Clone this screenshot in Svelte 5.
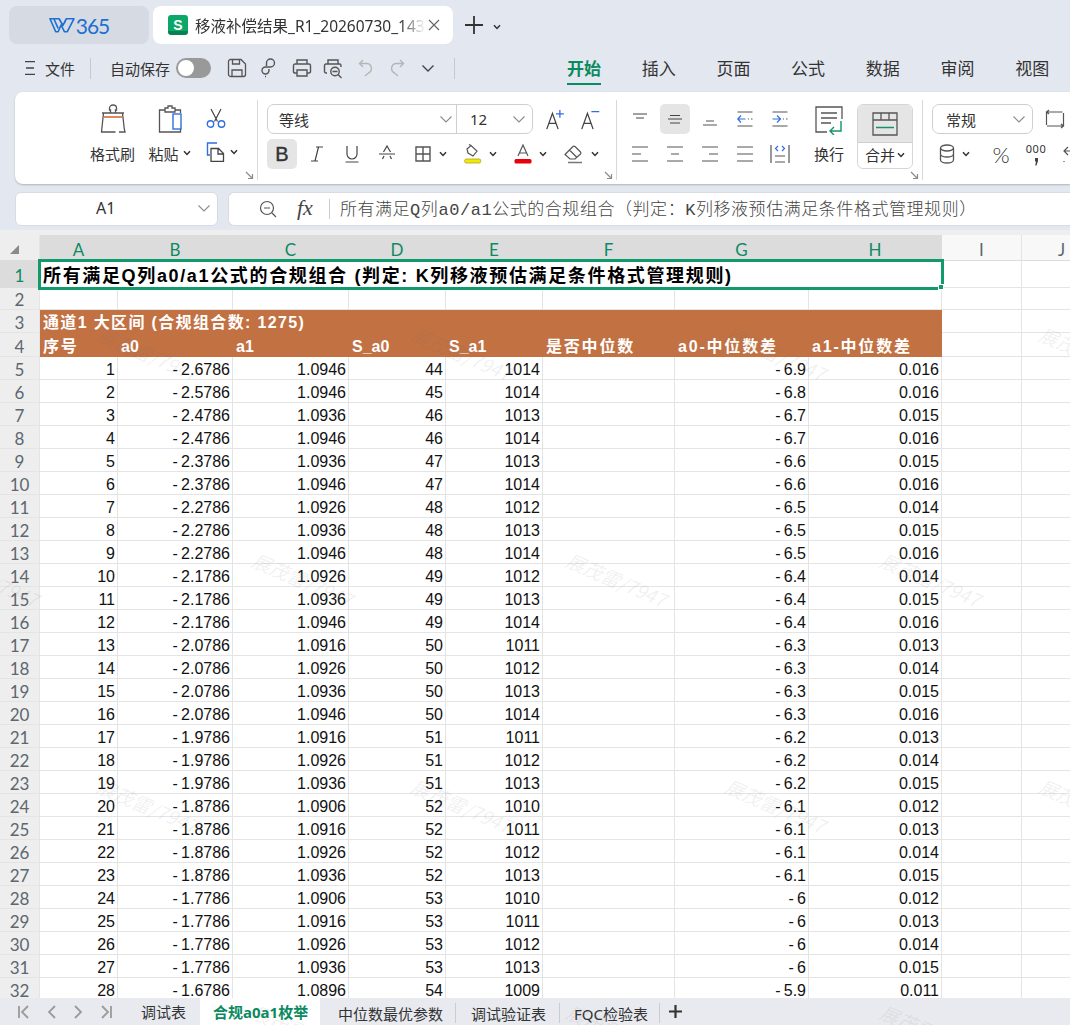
<script>
	const cols = ['A', 'B', 'C', 'D', 'E', 'F', 'G', 'H'];
	const widths = [40, 78, 115, 116, 97, 97, 132, 134, 133, 80, 80];
	const heads = ['序号', 'a0', 'a1', 'S_a0', 'S_a1', '是否中位数', 'a0-中位数差', 'a1-中位数差'];
	// a0, a1, S_a0, S_a1, a0 diff, a1 diff
	const rows = [
		['-2.6786', '1.0946', 44, 1014, '-6.9', '0.016'],
		['-2.5786', '1.0946', 45, 1014, '-6.8', '0.016'],
		['-2.4786', '1.0936', 46, 1013, '-6.7', '0.015'],
		['-2.4786', '1.0946', 46, 1014, '-6.7', '0.016'],
		['-2.3786', '1.0936', 47, 1013, '-6.6', '0.015'],
		['-2.3786', '1.0946', 47, 1014, '-6.6', '0.016'],
		['-2.2786', '1.0926', 48, 1012, '-6.5', '0.014'],
		['-2.2786', '1.0936', 48, 1013, '-6.5', '0.015'],
		['-2.2786', '1.0946', 48, 1014, '-6.5', '0.016'],
		['-2.1786', '1.0926', 49, 1012, '-6.4', '0.014'],
		['-2.1786', '1.0936', 49, 1013, '-6.4', '0.015'],
		['-2.1786', '1.0946', 49, 1014, '-6.4', '0.016'],
		['-2.0786', '1.0916', 50, 1011, '-6.3', '0.013'],
		['-2.0786', '1.0926', 50, 1012, '-6.3', '0.014'],
		['-2.0786', '1.0936', 50, 1013, '-6.3', '0.015'],
		['-2.0786', '1.0946', 50, 1014, '-6.3', '0.016'],
		['-1.9786', '1.0916', 51, 1011, '-6.2', '0.013'],
		['-1.9786', '1.0926', 51, 1012, '-6.2', '0.014'],
		['-1.9786', '1.0936', 51, 1013, '-6.2', '0.015'],
		['-1.8786', '1.0906', 52, 1010, '-6.1', '0.012'],
		['-1.8786', '1.0916', 52, 1011, '-6.1', '0.013'],
		['-1.8786', '1.0926', 52, 1012, '-6.1', '0.014'],
		['-1.8786', '1.0936', 52, 1013, '-6.1', '0.015'],
		['-1.7786', '1.0906', 53, 1010, '-6', '0.012'],
		['-1.7786', '1.0916', 53, 1011, '-6', '0.013'],
		['-1.7786', '1.0926', 53, 1012, '-6', '0.014'],
		['-1.7786', '1.0936', 53, 1013, '-6', '0.015'],
		['-1.6786', '1.0896', 54, 1009, '-5.9', '0.011']
	];
	const neg = (v) => String(v).replace('-', '-\u2009');
	const ascii = (s) => /^[\x00-\x7f]+$/.test(s);

	const marks = [];
	[[322, 109], [548, -50], [774, 109], [1000, -50]].forEach(([y, x0]) => {
		for (let i = 0; i < 4; i++) marks.push({ x: x0 + i * 314, y });
	});
</script>

{#snippet chev()}
	<svg class="chev" width="8" height="6" viewBox="0 0 8 6"><path d="M1 1.200 4 4.400 7 1.200" fill="none" stroke="#333" stroke-width="1.500" /></svg>
{/snippet}
{#snippet dd()}
	<svg width="14" height="9" viewBox="0 0 14 9"><path d="M1.500 1.500 7 7l5.500-5.500" fill="none" stroke="#8c8c8c" stroke-width="1.100" /></svg>
{/snippet}
{#snippet launcher()}
	<svg class="launch" width="9" height="9" viewBox="0 0 9 9"><path d="M1 1 7 7M3 7.500h4.500V3" fill="none" stroke="#8a8a8a" stroke-width="1.200" /></svg>
{/snippet}

<div class="app">
	<header class="tabbar">
		<div class="home">
			<svg width="26" height="16" viewBox="0 0 27 16"><path d="M1 1.500h9.500l4 7 3.500-7h8L19 15h-3l-3.500-7-3 7h-2.500zM5 1.500l4.500 10M18 1.500l-2 4.500" fill="none" stroke="#1c70d2" stroke-width="1.700" stroke-linejoin="round" /></svg>
			<span>365</span>
		</div>
		<div class="doc">
			<span class="s-tile">S</span>
			<span class="doc-name">移液补偿结果_R1_20260730_143</span>
			<svg width="12" height="12" viewBox="0 0 12 12"><path d="M1 1l10 10M11 1 1 11" stroke="#666" stroke-width="1.200" /></svg>
		</div>
		<svg class="plus" width="18" height="18" viewBox="0 0 18 18"><path d="M9 0v18M0 9h18" stroke="#333" stroke-width="1.800" /></svg>
		<span class="plus-chev">{@render chev()}</span>
	</header>

	<div class="quick">
		<svg class="menu" width="10" height="14" viewBox="0 0 10 14"><path d="M0 .7h10M1 7h8M0 13.300h10" stroke="#444" stroke-width="1.300" /></svg>
		<span class="q-file">文件</span>
		<i class="q-sep"></i>
		<span class="q-auto">自动保存</span>
		<span class="toggle"><b></b></span>
		<svg class="q-ic first" width="20" height="20" viewBox="0 0 20 20"><path d="M1.500 3.500a2 2 0 0 1 2-2H14l4.500 4.500v10.500a2 2 0 0 1-2 2h-13a2 2 0 0 1-2-2zM5 18.500V12h10v6.500M5.500 2v4h7V2" fill="none" stroke="#555" stroke-width="1.300" /></svg>
		<svg class="q-ic" style="margin-left:13px" width="18" height="20" viewBox="0 0 18 20"><path d="M6.500 8V5a4 4 0 1 1 4 4H5.500a3.500 3.500 0 1 0 3.500 3.500V11M5 18.500h1" fill="none" stroke="#555" stroke-width="1.400" /></svg>
		<svg class="q-ic" style="margin-left:14px" width="20" height="20" viewBox="0 0 20 20"><path d="M5 6V2h10v4M5 15H2.500a1.500 1.500 0 0 1-1-1V7.500A1.500 1.500 0 0 1 3 6h14a1.500 1.500 0 0 1 1.500 1.500V14a1.500 1.500 0 0 1-1.500 1h-2M5 12h10v6H5z" fill="none" stroke="#555" stroke-width="1.400" /></svg>
		<svg class="q-ic" style="margin-left:11px" width="21" height="21" viewBox="0 0 21 21"><path d="M5 6V2h10v4M4 15H3a1.500 1.500 0 0 1-1.500-1.500v-6A1.500 1.500 0 0 1 3 6h13.500A1.500 1.500 0 0 1 18 7.500V9" fill="none" stroke="#555" stroke-width="1.400" /><circle cx="12" cy="13.500" r="4.200" fill="none" stroke="#555" stroke-width="1.400" /><path d="m15 16.500 3.500 3.500M9.500 13.500h5" stroke="#555" stroke-width="1.400" /></svg>
		<svg class="q-ic" style="margin-left:14px" width="16" height="18" viewBox="0 0 16 18"><path d="M5 1 1.500 4.500 5 8M2 4.500h7a5 5 0 0 1 1.500 9.500L7 17" fill="none" stroke="#b5b5b5" stroke-width="1.400" /></svg>
		<svg class="q-ic" style="margin-left:15px" width="16" height="18" viewBox="0 0 16 18"><path d="M11 1l3.500 3.500L11 8M14 4.500H7A5 5 0 0 0 5.500 14L9 17" fill="none" stroke="#b5b5b5" stroke-width="1.400" /></svg>
		<svg class="q-ic" style="margin-left:16px" width="14" height="9" viewBox="0 0 14 9"><path d="M1.500 1.500 7 7l5.500-5.500" fill="none" stroke="#444" stroke-width="1.400" /></svg>
		<i class="q-sep last"></i>
		<nav class="ribbon-tabs">
			<span class="on">开始</span><span>插入</span><span>页面</span><span>公式</span><span>数据</span><span>审阅</span><span>视图</span>
		</nav>
	</div>

	<section class="ribbon">
		<div class="group clip">
			<div class="big">
				<svg width="26" height="30" viewBox="0 0 26 30"><path d="M10.500 9V6H9.500V4a3.500 3 0 0 1 7 0v2h-1v3M2 9h22M3.500 9 1.500 28h14M22.500 9l1 9c.3 4 .6 7 1.500 10h-6" fill="none" stroke="#555" stroke-width="1.300" /><path d="M4 13h18" stroke="#d4622a" stroke-width="1.400" /></svg>
				<span>格式刷</span>
			</div>
			<div class="big paste">
				<svg width="26" height="28" viewBox="0 0 26 28"><path d="M8 5H2.500v22h21v-7M18 5h5.500v3M8 5V3h3V1h4v2h3v4H8z" fill="none" stroke="#555" stroke-width="1.300" /><rect x="16" y="9" width="8" height="15" fill="#fff" stroke="#2f6fe0" stroke-width="1.400" /></svg>
				<span>粘贴{@render chev()}</span>
			</div>
			<div class="small-col">
				<svg width="20" height="20" viewBox="0 0 20 20"><path d="m5 1 6.500 12.500M15 1 8.500 13.500" stroke="#444" stroke-width="1.200" /><circle cx="4.500" cy="16" r="3.200" fill="none" stroke="#2f6fe0" stroke-width="1.400" /><circle cx="15.500" cy="16" r="3.200" fill="none" stroke="#2f6fe0" stroke-width="1.400" /></svg>
				<span class="copy">
					<svg width="20" height="20" viewBox="0 0 20 20"><path d="M11 1H1.500v12H4" fill="none" stroke="#2f6fe0" stroke-width="1.400" /><path d="M5 6.500h7.500l5 5v8H5zM12 7v5h5.500" fill="#fff" stroke="#444" stroke-width="1.300" /></svg>
					{@render chev()}
				</span>
			</div>
			{@render launcher()}
		</div>

		<div class="group font">
			<div class="line">
				<div class="combo font-box">
					<span class="cell name">等线{@render dd()}</span>
					<span class="cell size">12{@render dd()}</span>
				</div>
				<span class="tb" style="margin-left:2px">
					<svg width="21" height="21" viewBox="0 0 24 24"><path d="M2 23 8.500 5 15 23M4.500 16.500h8" fill="none" stroke="#444" stroke-width="1.500" /><path d="M17 1v9M12.500 5.500h9" stroke="#2f6fe0" stroke-width="1.500" /></svg>
				</span>
				<span class="tb">
					<svg width="21" height="21" viewBox="0 0 24 24"><path d="M2 23 8.500 5 15 23M4.500 16.500h8" fill="none" stroke="#444" stroke-width="1.500" /><path d="M13 3h9" stroke="#2f6fe0" stroke-width="1.500" /></svg>
				</span>
			</div>
			<div class="line">
				<span class="tb sel bold">B</span>
				<span class="tb"><svg width="16" height="16" viewBox="0 0 16 16"><path d="M7 1h7M9.500 1 6 15M2 15h7" fill="none" stroke="#444" stroke-width="1.200" /></svg></span>
				<span class="tb"><svg width="16" height="18" viewBox="0 0 16 18"><path d="M3 1v8a5 5 0 0 0 10 0V1M1.500 17h13" fill="none" stroke="#444" stroke-width="1.200" /></svg></span>
				<span class="tb"><svg width="18" height="18" viewBox="0 0 18 18"><path d="M5.500 7 9 1l3.500 6M4.500 14l1.500-3M13.500 14 12 11M1 9h16" fill="none" stroke="#444" stroke-width="1.200" /></svg></span>
				<span class="tb drop"><svg width="18" height="18" viewBox="0 0 18 18"><path d="M2 2h14v14H2zM9 2v14M2 9h14" fill="none" stroke="#555" stroke-width="1.400" /></svg>{@render chev()}</span>
				<span class="tb drop"><svg width="18" height="20" viewBox="0 0 18 20"><path d="M3 5l4-3.500L13 7l-4 5-5-3zM7 1.500 5 .5" fill="none" stroke="#555" stroke-width="1.200" /><rect x=".7" y="15" width="16" height="4" rx="1.500" fill="#f5e900" stroke="#a9a32a" stroke-width=".8" /></svg>{@render chev()}</span>
				<span class="tb drop"><svg width="18" height="20" viewBox="0 0 18 20"><path d="M4 12 9 1l5 11M5.500 9h7" fill="none" stroke="#555" stroke-width="1.200" /><rect x=".5" y="15" width="17" height="4.500" rx="1.500" fill="#e8000b" /></svg>{@render chev()}</span>
				<span class="tb drop"><svg width="20" height="20" viewBox="0 0 20 20"><path d="M1 10.500 9 2.500a1.500 1.500 0 0 1 2 0l5.500 5.500a1.500 1.500 0 0 1 0 2L11 15H6zM5.500 6l7 7" fill="none" stroke="#555" stroke-width="1.200" /><path d="M4 18.500h14" stroke="#777" stroke-width="1.300" /></svg>{@render chev()}</span>
			</div>
			{@render launcher()}
		</div>

		<div class="group align">
			<div class="a-grid">
				<span class="tb"><svg width="18" height="18" viewBox="0 0 18 18"><path d="M2 4h14M5 8h8" stroke="#444" stroke-width="1.200" /></svg></span>
				<span class="tb sel"><svg width="18" height="18" viewBox="0 0 18 18"><path d="M2 9h14M4 5.500h10M4 13h10" stroke="#444" stroke-width="1.200" /></svg></span>
				<span class="tb"><svg width="18" height="18" viewBox="0 0 18 18"><path d="M5 11h8M2 15h14" stroke="#555" stroke-width="1.200" /></svg></span>
				<span class="tb"><svg width="18" height="18" viewBox="0 0 18 18"><path d="M1.500 2h15M1.500 16h15M12 9h1M15 9h1.500" stroke="#555" stroke-width="1.200" /><path d="M9.500 9H2M5 5.500 1.800 9 5 12.500" fill="none" stroke="#2f6fe0" stroke-width="1.200" /></svg></span>
				<span class="tb"><svg width="18" height="18" viewBox="0 0 18 18"><path d="M1.500 2h15M1.500 16h15M12 9h1M15 9h1.500" stroke="#555" stroke-width="1.200" /><path d="M1.500 9H9M6 5.500 9.500 9 6 12.500" fill="none" stroke="#2f6fe0" stroke-width="1.200" /></svg></span>
				<span class="tb"><svg width="18" height="18" viewBox="0 0 18 18"><path d="M1 2h16M1 9h9M1 16h16" stroke="#555" stroke-width="1.200" /></svg></span>
				<span class="tb"><svg width="18" height="18" viewBox="0 0 18 18"><path d="M1 2h16M5 9h8M1 16h16" stroke="#555" stroke-width="1.200" /></svg></span>
				<span class="tb"><svg width="18" height="18" viewBox="0 0 18 18"><path d="M1 2h16M8 9h9M1 16h16" stroke="#555" stroke-width="1.200" /></svg></span>
				<span class="tb"><svg width="18" height="18" viewBox="0 0 18 18"><path d="M1 2h16M1 9h16M1 16h16" stroke="#555" stroke-width="1.200" /></svg></span>
				<span class="tb"><svg width="20" height="20" viewBox="0 0 20 20"><path d="M1 1v18M19 1v18M5 12h10M5 18h10" stroke="#555" stroke-width="1.200" /><path d="M8 2 5.500 4.500 8 7M12 2l2.500 2.500L12 7" fill="none" stroke="#2f6fe0" stroke-width="1.200" /></svg></span>
			</div>
			<div class="big wrap">
				<svg width="30" height="30" viewBox="0 0 30 30"><path d="M28 14V2H2v25h11" fill="none" stroke="#555" stroke-width="1.300" /><path d="M7 8h16M7 13h16M7 18h10" stroke="#555" stroke-width="1.300" /><path d="M27 16v10H16M20 22l-4 4 4 4" fill="none" stroke="#14936b" stroke-width="1.400" /></svg>
				<span>换行</span>
			</div>
			<div class="merge">
				<div class="merge-top">
					<svg width="26" height="24" viewBox="0 0 26 24"><path d="M1 1h24v22H1zM1 8h24M9 1v7M17 1v7" fill="none" stroke="#555" stroke-width="1.300" /><path d="M4 15.500h18" stroke="#14936b" stroke-width="1.500" /></svg>
				</div>
				<div class="merge-bot">合并{@render chev()}</div>
			</div>
			{@render launcher()}
		</div>

		<div class="group number">
			<div class="line">
				<div class="combo num-box"><span>常规</span>{@render dd()}</div>
				<span class="tb" style="margin-left:2px"><svg width="20" height="20" viewBox="0 0 20 20"><path d="M6 3H1.500v13M14 17h4.500V4M1.500 3h16M18.500 17H2M4 1 1.500 3 4 5M16 15l2.500 2-2.500 2" fill="none" stroke="#555" stroke-width="1.200" /></svg></span>
			</div>
			<div class="line">
				<span class="tb drop"><svg width="16" height="20" viewBox="0 0 16 20"><ellipse cx="8" cy="4" rx="6.500" ry="3" fill="none" stroke="#555" stroke-width="1.300" /><path d="M1.500 4v12c0 1.700 3 3 6.500 3s6.500-1.300 6.500-3V4M1.500 10c0 1.700 3 3 6.500 3s6.500-1.300 6.500-3" fill="none" stroke="#555" stroke-width="1.300" /></svg>{@render chev()}</span>
				<span class="tb pct" style="margin-left:4px">%</span>
				<span class="tb thou">000<svg width="5" height="9" viewBox="0 0 5 9"><path d="M1 1h3v3L2.500 8.500H1.200L2 4.500H1z" fill="#444" /></svg></span>
				<span class="tb"><svg width="18" height="20" viewBox="0 0 18 20"><path d="M6 3 2 7l4 4M2 7h12M9 12v1M13 12v1M13 17v1M2 17v1" fill="none" stroke="#555" stroke-width="1.200" /></svg></span>
			</div>
		</div>
	</section>

	<div class="formula">
		<div class="namebox"><span>A1</span>{@render dd()}</div>
		<div class="fx-box">
			<svg class="zoom-ic" width="18" height="18" viewBox="0 0 18 18"><circle cx="8" cy="8" r="6.500" fill="none" stroke="#555" stroke-width="1.200" /><path d="M5 8h6M13 13l4 4" stroke="#555" stroke-width="1.200" /></svg>
			<span class="fx">fx</span>
			<i class="fx-sep"></i>
			<span class="fx-text">所有满足Q列a0/a1公式的合规组合（判定：K列移液预估满足条件格式管理规则）</span>
		</div>
	</div>

	<main class="sheet">
		<table>
			<colgroup>
				{#each widths as w}<col style="width:{w}px" />{/each}
			</colgroup>
			<thead>
				<tr class="colhead">
					<th class="corner"><svg width="11" height="11" viewBox="0 0 11 11"><path d="M10 1v9H1z" fill="#8a8a8a" /></svg></th>
					{#each cols as c}<th class="hl">{c}</th>{/each}
					<th>I</th>
					<th>J</th>
				</tr>
			</thead>
			<tbody>
				<tr class="r1">
					<th class="hl">1</th>
					<td colspan="8" class="title">所有满足Q列a0/a1公式的合规组合 (判定: K列移液预估满足条件格式管理规则)<i class="handle"></i></td>
					<td></td><td></td>
				</tr>
				<tr class="r2">
					<th>2</th>
					{#each cols as c}<td></td>{/each}
					<td></td><td></td>
				</tr>
				<tr class="r3">
					<th>3</th>
					<td colspan="8" class="band">通道1 大区间 (合规组合数: 1275)</td>
					<td></td><td></td>
				</tr>
				<tr class="r4">
					<th>4</th>
					{#each heads as h}<td class="band hd" class:latin={ascii(h)}>{h}</td>{/each}
					<td></td><td></td>
				</tr>
				{#each rows as r, i}
					<tr>
						<th>{i + 5}</th>
						<td class="n">{i + 1}</td>
						<td class="n">{neg(r[0])}</td>
						<td class="n">{r[1]}</td>
						<td class="n">{r[2]}</td>
						<td class="n">{r[3]}</td>
						<td></td>
						<td class="n">{neg(r[4])}</td>
						<td class="n">{r[5]}</td>
						<td></td><td></td>
					</tr>
				{/each}
			</tbody>
		</table>
	</main>

	<footer class="sheetbar">
		<div class="nav">
			<svg width="14" height="14" viewBox="0 0 14 14"><path d="M2 1v12M11 1 5 7l6 6" fill="none" stroke="#9a9a9a" stroke-width="1.800" /></svg>
			<svg width="10" height="14" viewBox="0 0 10 14"><path d="M8 1 2 7l6 6" fill="none" stroke="#9a9a9a" stroke-width="1.800" /></svg>
			<svg width="10" height="14" viewBox="0 0 10 14"><path d="m2 1 6 6-6 6" fill="none" stroke="#9a9a9a" stroke-width="1.800" /></svg>
			<svg width="14" height="14" viewBox="0 0 14 14"><path d="M12 1v12M3 1l6 6-6 6" fill="none" stroke="#9a9a9a" stroke-width="1.800" /></svg>
		</div>
		<span class="stab">调试表</span>
		<span class="stab active">合规a0a1枚举</span>
		<span class="stab line t3">中位数最优参数</span>
		<span class="stab line t4">调试验证表</span>
		<span class="stab line t5">FQC检验表</span>
		<svg class="add" width="13" height="13" viewBox="0 0 13 13"><path d="M6.500 0v13M0 6.500h13" stroke="#333" stroke-width="2.200" /></svg>
	</footer>

	<div class="marks">
		{#each marks as m}
			<span style="left:{m.x}px;top:{m.y}px">展茂雷/7947</span>
		{/each}
	</div>
</div>

<style>
	:global(body) {
		margin: 0;
		background: #e3e7ef;
	}

	.app {
		position: relative;
		width: 1070px;
		height: 1025px;
		overflow: hidden;
		display: flex;
		flex-direction: column;
		background: #e3e7ef;
		color: #333;
		font-family: 'Noto Sans', 'Noto Sans CJK SC', sans-serif;
	}

	svg {
		flex: none;
		display: block;
	}

	/* title bar */
	.tabbar {
		height: 44px;
		flex: none;
		display: flex;
		align-items: flex-end;
		padding-left: 9px;
		box-sizing: border-box;
	}
	.home {
		width: 140px;
		height: 38px;
		border-radius: 8px;
		background: #d6dae3;
		display: flex;
		align-items: center;
		justify-content: center;
		gap: 1px;
		color: #1c70d2;
		font: 400 21px Lato, sans-serif;
		letter-spacing: -1px;
	}
	.doc {
		width: 300px;
		height: 38px;
		margin-left: 4px;
		border-radius: 8px;
		background: #fff;
		display: flex;
		align-items: center;
		box-sizing: border-box;
		padding: 0 13px 0 15px;
		font-size: 15.500px;
	}
	.s-tile {
		width: 20px;
		height: 20px;
		flex: none;
		border-radius: 3px;
		background: linear-gradient(#0ba769 80%, #078250 80%);
		color: #fff;
		font: 700 14px/20px 'Liberation Sans', sans-serif;
		text-align: center;
	}
	.doc-name {
		flex: 1;
		margin-left: 7px;
		white-space: nowrap;
		overflow: hidden;
		mask-image: linear-gradient(90deg, #000 88%, transparent 99%);
	}
	.plus {
		margin: 0 0 10px 12px;
	}
	.plus-chev {
		margin: 0 0 14px 10px;
	}

	/* quick access row */
	.quick {
		height: 48px;
		flex: none;
		display: flex;
		align-items: center;
		padding-left: 25px;
		font-size: 15px;
		position: relative;
	}
	.q-file {
		margin-left: 10px;
	}
	.q-sep {
		width: 1px;
		height: 21px;
		background: #c4c8d0;
		margin: 0 19px 0 15px;
	}
	.q-sep.last {
		margin: 0 0 0 19px;
	}
	.toggle {
		width: 35px;
		height: 20px;
		margin-left: 6px;
		border-radius: 10px;
		background: #999;
		box-sizing: border-box;
		padding: 2px;
	}
	.toggle b {
		display: block;
		width: 16px;
		height: 16px;
		border-radius: 50%;
		background: #fff;
	}
	.q-ic.first {
		margin-left: 16px;
	}
	.ribbon-tabs {
		display: flex;
		gap: 40.700px;
		margin: -2px 0 0 112px;
		font-size: 17px;
		align-self: stretch;
		align-items: center;
	}
	.ribbon-tabs span {
		position: relative;
	}
	.ribbon-tabs .on {
		color: #0b8a60;
		font-weight: 700;
	}
	.ribbon-tabs .on::after {
		content: '';
		position: absolute;
		left: 0;
		right: 0;
		bottom: -5px;
		height: 2px;
		background: #0b8a60;
	}

	/* ribbon */
	.ribbon {
		height: 92px;
		flex: none;
		margin-left: 15px;
		background: #fff;
		border-radius: 8px 0 0 8px;
		box-shadow: 0 1px 2px rgba(0, 0, 0, 0.22);
		display: flex;
		overflow: hidden;
		box-sizing: border-box;
		padding: 8px 0 4px;
		font-size: 15px;
	}
	.group {
		position: relative;
		box-sizing: border-box;
		border-right: 1px solid #d8d8d8;
		padding-top: 4px;
		flex: none;
	}
	.launch {
		position: absolute;
		right: 3px;
		bottom: 0;
	}
	.clip {
		width: 243px;
		padding-left: 75px;
		display: flex;
		align-items: flex-start;
	}
	.big {
		display: flex;
		flex-direction: column;
		align-items: center;
		width: 45px;
	}
	.big span {
		display: flex;
		align-items: center;
		gap: 4px;
		margin-top: 9px;
		white-space: nowrap;
		height: 20px;
	}
	.big > svg {
		height: 30px;
	}
	.paste {
		margin-left: 12px;
	}
	.small-col {
		margin-left: 14px;
		padding-top: 4px;
		display: flex;
		flex-direction: column;
		gap: 14px;
		align-items: flex-start;
	}
	.copy {
		display: flex;
		align-items: center;
		gap: 4px;
	}
	.font {
		width: 359px;
		padding-left: 9px;
	}
	.line {
		display: flex;
		gap: 5px;
		height: 30px;
		margin-bottom: 5px;
	}
	.tb {
		width: 30px;
		height: 30px;
		border-radius: 5px;
		flex: none;
		display: flex;
		align-items: center;
		justify-content: center;
	}
	.tb.sel {
		background: #e5e5e5;
	}
	.tb.bold {
		font: 400 20px 'Liberation Sans', sans-serif;
		-webkit-text-stroke: 0.4px #333;
	}
	.tb.drop {
		width: 45px;
		justify-content: flex-start;
		padding-left: 7px;
		box-sizing: border-box;
		gap: 7px;
	}
	.combo {
		height: 30px;
		box-sizing: border-box;
		border: 1px solid #cfcfcf;
		border-radius: 7px;
		display: flex;
		align-items: center;
		font-size: 15px;
	}
	.font-box {
		width: 266px;
	}
	.cell {
		display: flex;
		align-items: center;
		justify-content: space-between;
		height: 100%;
		box-sizing: border-box;
	}
	.name {
		width: 189px;
		padding: 0 3px 0 11px;
		border-right: 1px solid #cfcfcf;
	}
	.size {
		flex: 1;
		padding: 0 6px 0 13px;
		font-size: 15px;
	}
	.align {
		width: 306px;
		padding-left: 8px;
		display: flex;
	}
	.a-grid {
		width: 171px;
		display: grid;
		grid-template-columns: repeat(5, 30px);
		grid-auto-rows: 30px;
		gap: 5px;
	}
	.wrap {
		width: 48px;
		margin-left: 9px;
		padding-top: 1px;
	}
	.wrap span {
		margin-top: 8px;
	}
	.merge {
		width: 56px;
		height: 65px;
		margin-left: 4px;
		box-sizing: border-box;
		border: 1px solid #d6d6d6;
		border-radius: 6px;
		overflow: hidden;
	}
	.merge-top {
		height: 37px;
		background: #e5e5e5;
		border-bottom: 1px solid #cfcfcf;
		display: flex;
		align-items: center;
		justify-content: center;
	}
	.merge-bot {
		display: flex;
		align-items: center;
		justify-content: center;
		gap: 2px;
		height: 23px;
		white-space: nowrap;
		font-size: 15px;
	}
	.number {
		flex: 1;
		border-right: 0;
		padding-left: 9px;
	}
	.num-box {
		width: 101px;
		justify-content: space-between;
		padding: 0 6px 0 13px;
	}
	.pct {
		font: 300 22px Lato, sans-serif;
	}
	.thou {
		font: 400 11px/12px 'Noto Sans', sans-serif;
		flex-direction: column;
		gap: 2px;
		letter-spacing: 0.5px;
	}

	/* formula bar */
	.formula {
		height: 34px;
		flex: none;
		margin: 8px 0 4px 15px;
		display: flex;
		gap: 10px;
	}
	.namebox,
	.fx-box {
		background: #fff;
		box-sizing: border-box;
		border: 1px solid #d8dbe2;
		border-radius: 6px;
		display: flex;
		align-items: center;
	}
	.namebox {
		width: 203px;
		padding: 0 6px 2px 80px;
		justify-content: space-between;
		font-size: 16px;
	}
	.fx-box {
		flex: 1;
		border-radius: 6px 0 0 6px;
		border-right: 0;
		padding-left: 30px;
	}
	.fx {
		margin-left: 20px;
		font: italic 400 22px 'Liberation Serif', serif;
		color: #444;
		padding-bottom: 2px;
	}
	.fx-sep {
		width: 1px;
		height: 20px;
		background: #ccc;
		margin: 0 10px 0 16px;
	}
	.fx-text {
		font: 300 17px 'Liberation Mono', 'Noto Sans CJK SC', monospace;
		letter-spacing: 0.55px;
		color: #444;
		white-space: nowrap;
		padding-bottom: 4px;
	}

	/* grid */
	.sheet {
		flex: 1;
		min-height: 0;
		overflow: hidden;
		background: #fff;
		border-top: 5px solid #eee;
	}
	table {
		table-layout: fixed;
		width: 1102px;
		border-collapse: separate;
		border-spacing: 0;
		font: 16px/18px 'Liberation Sans', 'Noto Sans CJK SC', sans-serif;
		color: #111;
	}
	th,
	td {
		padding: 4px 0 0;
		box-sizing: border-box;
		border-right: 1px solid #e4e4e4;
		border-bottom: 1px solid #e4e4e4;
		overflow: hidden;
		white-space: nowrap;
	}
	th {
		font: 400 17px/18px Lato, sans-serif;
		color: #5c676e;
		background: #eee;
		text-align: center;
	}
	tbody tr {
		height: 23px;
	}
	.colhead {
		height: 26px;
	}
	.colhead th {
		background: #f8f8f8;
		border-bottom: 1px solid #ddd;
	}
	.colhead th.corner {
		background: #eee;
	}
	.corner svg {
		margin-left: 9px;
	}
	.colhead th.hl,
	tbody th.hl {
		background: #dcdcdc;
		color: #0d8a64;
		border-color: #dcdcdc;
	}
	.r1 {
		height: 27px;
	}
	.r2 {
		height: 22px;
	}
	.r2 th {
		padding-top: 3px;
	}
	.r4 {
		height: 24px;
	}
	.title {
		position: relative;
		outline: 3px solid #129a6f;
		outline-offset: -1px;
		padding-left: 3px;
		font-weight: 700;
		font-size: 18px;
		letter-spacing: 1.650px;
		color: #000;
		overflow: visible;
	}
	.handle {
		position: absolute;
		right: -3px;
		bottom: -3px;
		width: 6px;
		height: 6px;
		background: #129a6f;
		border: 1px solid #fff;
		box-sizing: border-box;
	}
	.band {
		background: #c27143;
		color: #fff;
		font-weight: 700;
		letter-spacing: 1.350px;
		padding-left: 3px;
		border-color: #c27143;
	}
	.hd {
		letter-spacing: 1.800px;
		overflow: visible;
	}
	.hd.latin {
		letter-spacing: 0;
	}
	.n {
		text-align: right;
		padding-right: 2px;
	}

	/* sheet tabs */
	.sheetbar {
		height: 27px;
		flex: none;
		background: #e8eaef;
		display: flex;
		align-items: stretch;
		font-size: 15px;
	}
	.nav {
		width: 128px;
		padding-left: 17px;
		box-sizing: border-box;
		display: flex;
		align-items: center;
		gap: 16px;
	}
	.stab {
		display: flex;
		align-items: center;
		padding: 0 14px 0 13px;
		white-space: nowrap;
		position: relative;
	}
	.stab.active {
		background: #fff;
		color: #0b8a60;
		font-weight: 700;
		width: 120px;
		box-sizing: border-box;
		padding: 0 0 0 13px;
	}
	.stab.t3 {
		padding: 0 13px 0 18px;
	}
	.stab.t4 {
		padding: 0 14px 0 15px;
	}
	.stab.t5 {
		padding: 0 12px 0 14px;
	}
	.stab.line::after {
		content: '';
		position: absolute;
		right: 0;
		top: 5px;
		bottom: 5px;
		width: 1px;
		background: #c9ccd3;
	}
	.add {
		align-self: center;
		margin-left: 9px;
	}

	/* watermark over everything */
	.marks {
		position: absolute;
		inset: 0;
		pointer-events: none;
		overflow: hidden;
	}
	.marks span {
		position: absolute;
		font: 400 19px 'Noto Sans CJK SC', sans-serif;
		color: rgba(110, 110, 110, 0.1);
		white-space: nowrap;
		transform-origin: 0 0;
		transform: rotate(23deg) skewX(-14deg);
	}
</style>
